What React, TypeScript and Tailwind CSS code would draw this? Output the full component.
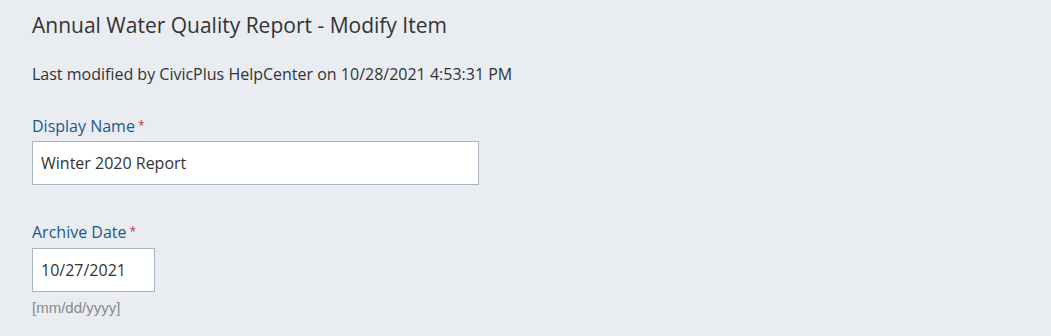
import React, { useState } from 'react';

export default function App() {
  const [name, setName] = useState('Winter 2020 Report');
  const [date, setDate] = useState('10/27/2021');

  return (
    <div className="min-h-[336px] w-full bg-[#e9edf2] px-[32px] pt-[11px] font-['Open_Sans','Noto_Sans',sans-serif] text-[#333]">
      <h1 className="text-[21px] leading-[28px] font-normal text-[#333]">
        Annual Water Quality Report - Modify Item
      </h1>

      <p className="mt-[25px] text-[16px] leading-[20px] text-[#333]">
        Last modified by CivicPlus HelpCenter on 10/28/2021 4:53:31 PM
      </p>

      {/* Display name */}
      <div className="mt-[30px]">
        <label className="block text-[16px] leading-[24px] text-[#1b598b]">
          Display Name<span className="ml-[3px] align-top text-[12px] text-[#b4404a]">*</span>
        </label>
        <input
          type="text"
          value={name}
          onChange={(e) => setName(e.target.value)}
          className="mt-[3px] block h-[44px] w-[447px] border border-[#a8b4c1] bg-white px-[8px] text-[16px] text-[#333] outline-none"
        />
      </div>

      {/* Archive date */}
      <div className="mt-[35px]">
        <label className="block text-[16px] leading-[24px] text-[#1b598b]">
          Archive Date<span className="ml-[3px] align-top text-[12px] text-[#b4404a]">*</span>
        </label>
        <input
          type="text"
          value={date}
          onChange={(e) => setDate(e.target.value)}
          className="mt-[4px] block h-[44px] w-[123px] border border-[#a8b4c1] bg-white px-[8px] text-[16px] text-[#333] outline-none"
        />
        <div className="mt-[6px] font-['Liberation_Sans',Arial,sans-serif] text-[15px] leading-[20px] text-[#8a8a8a]">
          [mm/dd/yyyy]
        </div>
      </div>
    </div>
  );
}
